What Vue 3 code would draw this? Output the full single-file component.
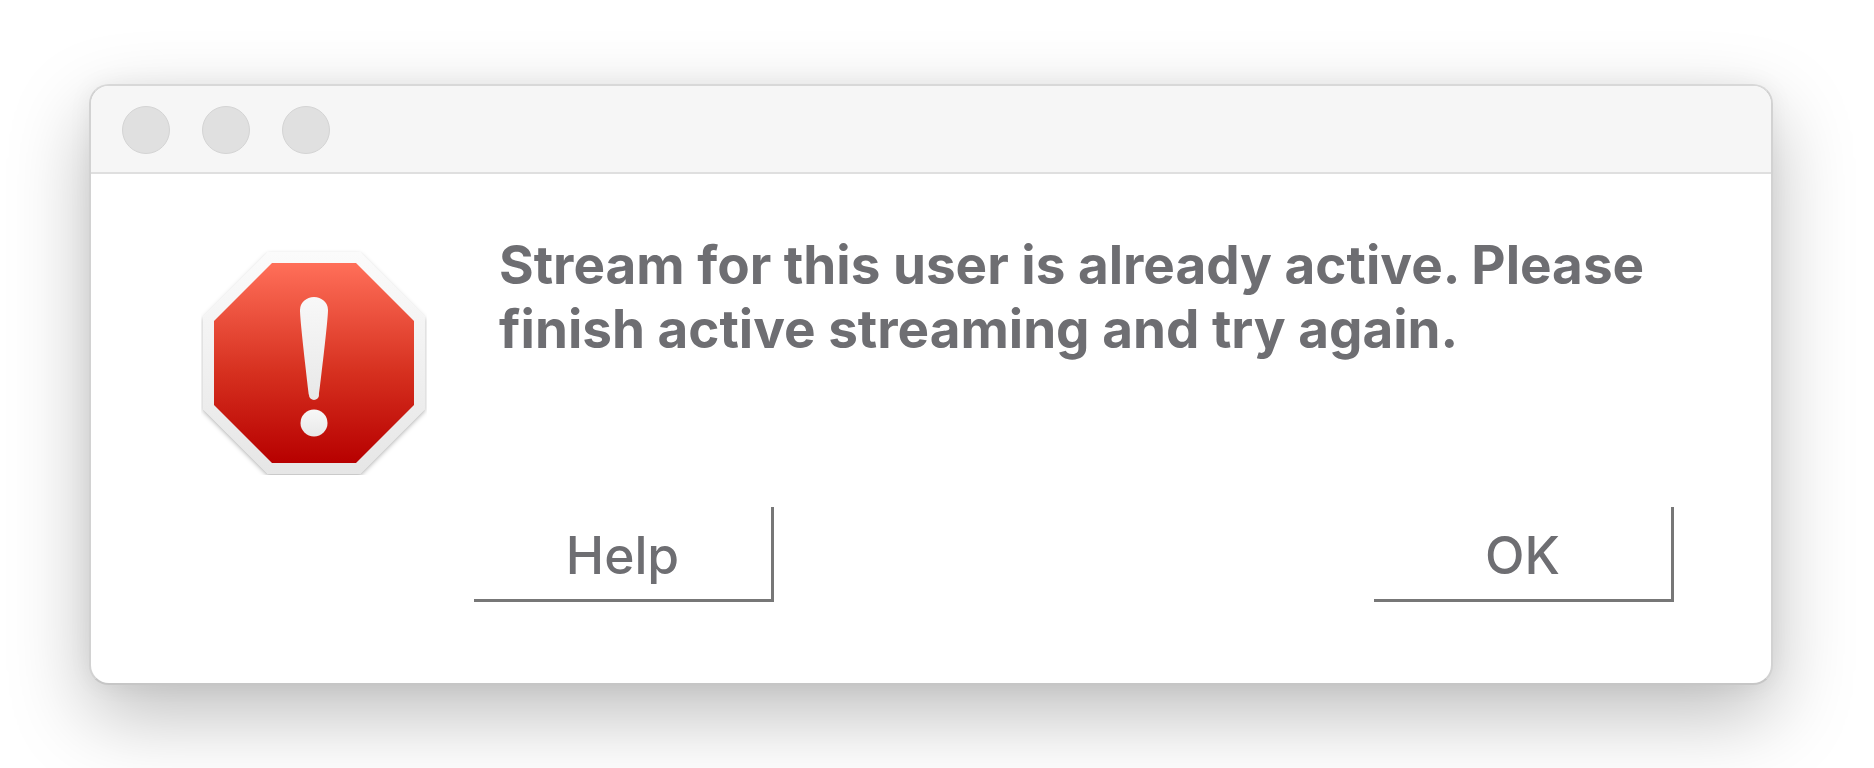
<script setup>
const dots = [0, 1, 2]
</script>

<template>
  <div class="page">
    <section class="window">
      <header class="titlebar">
        <span v-for="d in dots" :key="d" class="dot"></span>
      </header>
      <div class="body">
        <svg class="alert" width="226" height="226" viewBox="0 0 226 226" aria-hidden="true">
          <defs>
            <linearGradient id="red" x1="0" y1="0" x2="0" y2="1">
              <stop offset="0" stop-color="#ff6f59" />
              <stop offset="0.55" stop-color="#d6301f" />
              <stop offset="1" stop-color="#b70000" />
            </linearGradient>
            <linearGradient id="rim" x1="0" y1="0" x2="0" y2="1">
              <stop offset="0" stop-color="#fbfbfb" />
              <stop offset="1" stop-color="#e6e6e6" />
            </linearGradient>
            <filter id="soft" x="-10%" y="-10%" width="120%" height="120%">
              <feDropShadow dx="0" dy="2" stdDeviation="2" flood-color="#000" flood-opacity="0.28" />
            </filter>
            <linearGradient id="mark" x1="0" y1="0" x2="0" y2="1">
              <stop offset="0" stop-color="#f8f8f8" />
              <stop offset="1" stop-color="#e8e8e8" />
            </linearGradient>
          </defs>
          <polygon points="67,3 159,3 224,68 224,160 159,225 67,225 2,160 2,68" fill="url(#rim)" filter="url(#soft)" />
          <polygon points="71,14 155,14 213,72 213,156 155,214 71,214 13,156 13,72" fill="url(#red)" />
          <path d="M99 61 a14 13 0 0 1 28 0 C127 72 119 138 118 146 a5 5 0 0 1 -10 0 C107 138 99 72 99 61 Z" fill="url(#mark)" />
          <circle cx="113" cy="174" r="13.5" fill="url(#mark)" />
        </svg>
        <div class="content">
          <p class="message">Stream for this user is already active. Please<br />finish active streaming and try again.</p>
          <div class="actions">
            <button class="btn" type="button">Help</button>
            <button class="btn" type="button">OK</button>
          </div>
        </div>
      </div>
    </section>
  </div>
</template>

<style>
html, body { margin: 0; background: #fff; }
</style>

<style scoped>
.page {
  width: 1874px;
  height: 768px;
  overflow: hidden;
  box-sizing: border-box;
  padding: 84px 0 0 89px;
  background: #fff;
  font-family: Inter, "Liberation Sans", sans-serif;
  color: #6e6e72;
}
.window {
  width: 1684px;
  height: 601px;
  box-sizing: border-box;
  display: flex;
  flex-direction: column;
  background: #fff;
  border: 2px solid #d2d2d2;
  border-top-color: #d8d8d8;
  border-bottom-color: #c6c6c6;
  border-radius: 20px;
  overflow: hidden;
  box-shadow: 0 30px 80px rgba(0, 0, 0, 0.26), 0 0 24px rgba(0, 0, 0, 0.05);
}
.titlebar {
  height: 88px;
  flex: none;
  box-sizing: border-box;
  display: flex;
  align-items: center;
  gap: 32px;
  padding: 2px 0 0 31px;
  background: #f6f6f6;
  border-bottom: 2px solid #dfdfdf;
}
.dot {
  width: 48px;
  height: 48px;
  box-sizing: border-box;
  border-radius: 50%;
  background: #e0e0e0;
  border: 1px solid #d4d4d4;
}
.body {
  flex: 1;
  display: flex;
  align-items: flex-start;
}
.alert {
  flex: none;
  margin: 75px 0 0 110px;
  filter: blur(0.6px);
}
.content {
  flex: 1;
  display: flex;
  flex-direction: column;
  padding: 59px 97px 0 47px;
  box-sizing: border-box;
}
.message {
  margin: 0 0 0 25px;
  font-size: 53px;
  line-height: 64px;
  font-weight: 700;
  filter: blur(0.6px);
}
.actions {
  display: flex;
  justify-content: space-between;
  margin-top: 146px;
}
.btn {
  width: 300px;
  height: 95px;
  padding: 4px 0 0;
  box-sizing: border-box;
  background: #fff;
  border: 0;
  border-right: 3px solid #777;
  border-bottom: 3px solid #777;
  font-family: Inter, "Liberation Sans", sans-serif;
  font-size: 51.5px;
  font-weight: 500;
  color: #6e6e72;
  filter: blur(0.6px);
}
</style>
